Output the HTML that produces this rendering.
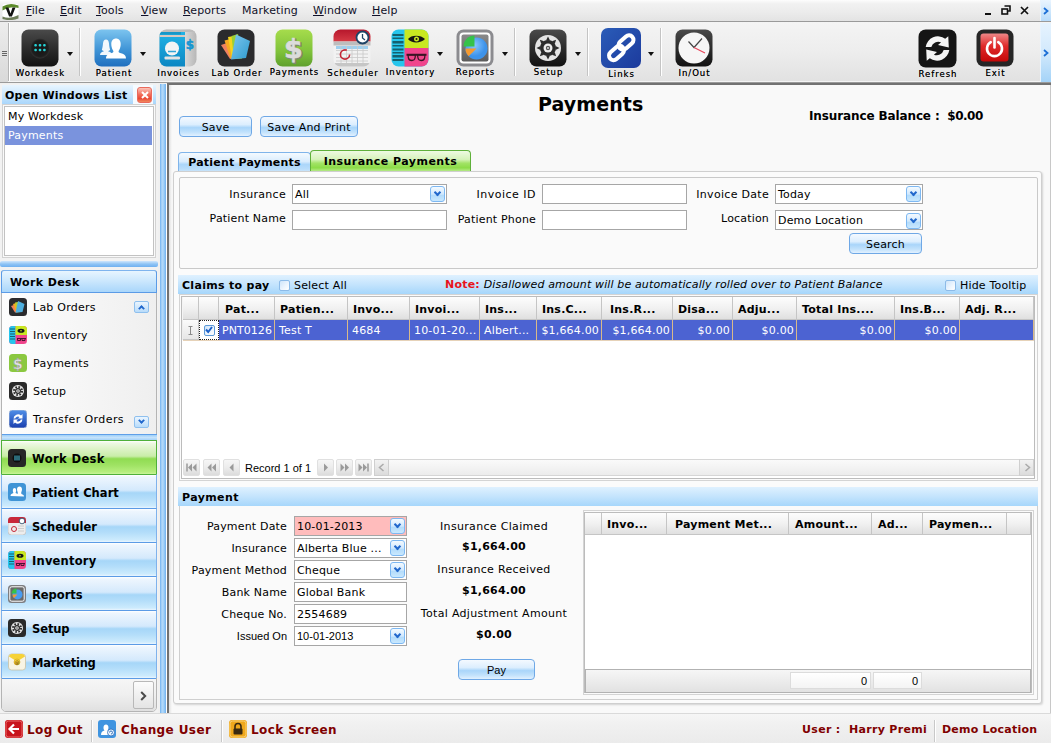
<!DOCTYPE html>
<html><head><meta charset="utf-8"><title>Payments</title>
<style>
*{box-sizing:border-box;margin:0;padding:0}
html,body{width:1051px;height:743px;overflow:hidden}
body{position:relative;background:#f0f0f0;font-family:"DejaVu Sans","Liberation Sans",sans-serif;font-size:11px;letter-spacing:0.18px;color:#000;line-height:1}
.a{position:absolute}
.t{position:absolute;white-space:nowrap;line-height:16px;height:16px}
.b{font-weight:bold}
u{text-decoration:underline;text-underline-offset:1px}
/* menubar */
#menubar{left:0;top:0;width:1051px;height:22px;background:linear-gradient(#fdfdfd 0,#f1f1f1 18%,#ececec 55%,#e3e3e3 100%);border-bottom:1px solid #9a9a9a}
#menubar .t{top:3px;font-size:11px;letter-spacing:0.12px;color:#101028}
/* toolbar */
#toolbar{left:0;top:22px;width:1051px;height:61px;background:linear-gradient(#f4f4f4,#ededed 50%,#e1e1e1);border-bottom:1px solid #9b9b9b;box-shadow:inset 0 -1px 0 #f4f4f4}
.ico{position:absolute;width:38px;height:38px;top:7px}
.tl{text-shadow:0 0 0 rgba(0,0,0,.7);color:#000;position:absolute;top:44px;height:14px;line-height:14px;font-size:9.5px;letter-spacing:0.95px;text-align:center;white-space:nowrap;transform:translateX(-50%);padding-left:1px}
.dd{position:absolute;top:29.5px;width:0;height:0;border:3.5px solid transparent;border-top:4px solid #111;border-bottom:0}
.sep{position:absolute;top:6px;width:1px;height:48px;background:#c4c4c4;border-right:1px solid #fff;box-sizing:content-box}

/* window controls */
#ovf{left:1040px;top:0;width:11px;height:84px}
/* left */
.hdr{position:absolute;background:linear-gradient(#e8f5ff,#cde8fd 45%,#a9d6fb);font-weight:bold}
.lst{position:absolute;background:#fff;border:1px solid #b9b9b9}
.nav{position:absolute;left:1px;width:156px;height:34px;border-top:1px solid #5b9be6;background:linear-gradient(#fff 0%,#eef6fe 6%,#e2f0fd 25%,#d4e9fc 46%,#a6d6f8 54%,#b4defa 72%,#cdebfd 94%,#eaf6ff 100%);font-weight:bold;font-size:11.5px;letter-spacing:0;border-left:1px solid #7fb2ec;border-right:1px solid #7fb2ec}
.nav .t{left:30px;top:10px;font-size:11.5px}
.nav svg{position:absolute;left:6px;top:8px;width:18px;height:18px}
.wi{position:absolute;left:9px;width:18px;height:18px}
.wt{position:absolute;left:33px;margin-top:1px;white-space:nowrap;line-height:16px;letter-spacing:0.25px}
.sb{position:absolute;width:15px;height:12px;border:1px solid #8fc0ee;border-radius:2px;background:linear-gradient(#eaf5ff,#b9dcfa)}
/* main */
.btn{position:absolute;height:21px;border:1px solid #6fa8e6;border-radius:4px;background:linear-gradient(#f4f9ff 0%,#dceefe 40%,#a9d5fa 56%,#c2e2fc 80%,#e2f1ff 100%);text-align:center;line-height:21px;white-space:nowrap}
.inp{position:absolute;height:20px;background:#fff;border:1px solid #a6a6a6;line-height:20px;padding-left:2px;white-space:nowrap;overflow:hidden}
.cb{position:absolute;right:1px;top:1px;width:15px;height:16px;border:1px solid #7db8f2;border-radius:3px;background:linear-gradient(#f4faff,#d2e9fd 50%,#b4dcfb 60%,#c9e8fe)}
.cb:after,.sb:after{content:"";box-sizing:border-box;position:absolute;left:4px;top:3.2px;width:5px;height:5px;border-right:2px solid #2268cc;border-bottom:2px solid #2268cc;transform:rotate(45deg) scale(1.05)}
.sb:after{top:1px;left:4px;transform:rotate(45deg) scale(.95)}.sb.up:after{transform:rotate(225deg) scale(.95);top:3.5px}
.lbl{position:absolute;margin-top:1px;white-space:nowrap;text-align:right;line-height:16px}
.gh{position:absolute;top:0;height:23px;border-right:1px solid #c5c5c5;background:linear-gradient(#fdfdfd,#f1f1f1 50%,#e0e0e0);font-weight:bold;line-height:25px;padding-left:5px;white-space:nowrap;overflow:hidden;border-bottom:1px solid #c5c5c5}
.gc{position:absolute;top:0;height:20px;border-right:1px solid #d8b98a;color:#fff;line-height:21px;padding:0 2px 0 4px;white-space:nowrap;overflow:hidden}
.r{text-align:right}
.nb{position:absolute;top:1px;width:17px;height:17px;border:1px solid #e0e0e0;background:linear-gradient(#f6f6f6,#ececec 50%,#dcdcdc);border-radius:2px}
.nb svg{position:absolute;left:2px;top:3px;width:11px;height:9px}
.ck{position:absolute;width:11px;height:11px;border:1px solid #8dbbe8;border-radius:2px;background:linear-gradient(135deg,#cfe5fa,#eef6fe 60%,#fff)}
.st{position:absolute;top:7px;line-height:18px;font-weight:bold;font-size:12px;letter-spacing:0.4px;color:#800000;white-space:nowrap}
.ss{position:absolute;top:6px;width:1px;height:22px;background:#c8c8c8;border-right:1px solid #fff;box-sizing:content-box}
.b,b,.hdr,.gh{font-size:11px;letter-spacing:0.22px}
.tl{font-family:"DejaVu Sans Condensed","DejaVu Sans","Liberation Sans",sans-serif}
</style></head>
<body>
<!-- MENUBAR -->
<div id="menubar" class="a">
<svg class="a" style="left:2px;top:3px" width="17" height="17" viewBox="0 0 17 17"><rect x="0.5" y="1" width="16" height="15" rx="2" fill="#fff"/><path d="M0.5 3.500 Q8 -1 16.5 2.500 L16.5 5 Q8 2.500 0.5 7.500Z" fill="#5c8a2a"/><path d="M0.5 13.500 Q8 16.500 16.5 12 L16.5 15.5 Q8 18.500 0.5 16Z" fill="#6e7d5a"/><path d="M3.5 4.5h3l2 6 2-6h3l-3.6 9h-2.8z" fill="#111"/></svg>
<div class="t" style="left:26px"><u>F</u>ile</div>
<div class="t" style="left:60px"><u>E</u>dit</div>
<div class="t" style="left:96px"><u>T</u>ools</div>
<div class="t" style="left:141px"><u>V</u>iew</div>
<div class="t" style="left:183px"><u>R</u>eports</div>
<div class="t" style="left:242px">Marketing</div>
<div class="t" style="left:313px"><u>W</u>indow</div>
<div class="t" style="left:372px"><u>H</u>elp</div>
</div>
<!-- TOOLBAR -->
<div id="toolbar" class="a">
<div class="a" style="left:0;top:0;width:8px;height:60px;background:linear-gradient(#ededed,#d9d9d9)"></div>
<div class="a" style="left:8px;top:1px;width:1px;height:58px;background:#b5b5b5"></div>
<div class="a" style="left:9px;top:1px;width:1px;height:58px;background:#fff"></div>
<div class="a" style="left:2px;top:29px;width:5px;height:1px;background:#666;box-shadow:0 2px 0 #666,0 4px 0 #666"></div>
<div class="sep" style="left:79px"></div>
<div class="sep" style="left:514px"></div>
<div class="sep" style="left:587px"></div>
<div class="sep" style="left:660px"></div>
<i class="dd" style="left:67px"></i><i class="dd" style="left:140px"></i><i class="dd" style="left:437px"></i><i class="dd" style="left:502px"></i><i class="dd" style="left:575px"></i><i class="dd" style="left:648px"></i>
<!-- Workdesk -->
<svg class="ico" style="left:21px" viewBox="0 0 38 38"><defs><linearGradient id="gdk" x1="0" y1="0" x2="0" y2="1"><stop offset="0" stop-color="#4a4a4a"/><stop offset="0.5" stop-color="#2c2c2c"/><stop offset="1" stop-color="#121212"/></linearGradient><radialGradient id="gdc"><stop offset="0" stop-color="#151515"/><stop offset="0.8" stop-color="#1d1d1d"/><stop offset="1" stop-color="#333"/></radialGradient></defs><rect x="0.5" y="0.5" width="37" height="37" rx="7" fill="url(#gdk)"/><circle cx="19" cy="19.5" r="10" fill="url(#gdc)"/><g fill="#25d4d8"><rect x="13.3" y="15" width="2.6" height="2.4" rx="1"/><rect x="17.7" y="15" width="2.6" height="2.4" rx="1"/><rect x="22.1" y="15" width="2.6" height="2.4" rx="1"/><rect x="13.3" y="19.8" width="2.6" height="2.4" rx="1"/><rect x="17.7" y="19.8" width="2.6" height="2.4" rx="1"/><rect x="22.1" y="19.8" width="2.6" height="2.4" rx="1"/></g></svg>
<div class="tl" style="left:40px">Workdesk</div>
<!-- Patient -->
<svg class="ico" style="left:94px" viewBox="0 0 38 38"><defs><linearGradient id="gpt" x1="0" y1="0" x2="0" y2="1"><stop offset="0" stop-color="#7cc4ef"/><stop offset="0.55" stop-color="#3f94d6"/><stop offset="1" stop-color="#1f6fbf"/></linearGradient></defs><rect x="0.5" y="0.5" width="37" height="37" rx="7" fill="url(#gpt)"/><path d="M6 26c0-2.5 2-3.2 4-3.8l-2.2-1.2c.6-2 1-3.800 1.200-6.500C9.200 12 10.300 10.500 12 10.500s2.800 1.500 3 4c.2 2.700.6 4.500 1.200 6.500L14 22.200c2 .6 4 1.300 4 3.800z" fill="#fff" opacity=".93"/><path d="M12 29.500c0-4 3-4.700 6.300-5.800 1.200-.4 1.400-1.300.8-2.300-1.300-2-1.800-4-1.800-6.400 0-3.400 1.900-5.500 4.700-5.500s4.700 2.100 4.700 5.500c0 2.400-.5 4.400-1.800 6.400-.6 1-.4 1.900.8 2.300 3.300 1.100 6.300 1.800 6.300 5.800z" fill="#fff"/></svg>
<div class="tl" style="left:113.500px">Patient</div>
<!-- Invoices -->
<svg class="ico" style="left:159px" viewBox="0 0 38 38"><defs><clipPath id="cinv"><rect x="0.5" y="0.5" width="37" height="37" rx="7"/></clipPath><linearGradient id="ginv" x1="0" y1="0" x2="0" y2="1"><stop offset="0" stop-color="#22b3e6"/><stop offset="1" stop-color="#0b86c2"/></linearGradient><linearGradient id="ginr" x1="0" y1="0" x2="1" y2="0"><stop offset="0" stop-color="#c9c9c9"/><stop offset="0.5" stop-color="#ededed"/><stop offset="1" stop-color="#b5b5b5"/></linearGradient></defs><g clip-path="url(#cinv)"><rect width="38" height="38" fill="url(#ginr)"/><rect x="0" y="0" width="38" height="3" fill="#bdbdbd"/><rect x="0" y="3" width="26" height="35" fill="url(#ginv)"/><rect x="0" y="3" width="22" height="2.500" fill="#1697c8"/><rect x="0" y="6" width="26" height="2" fill="#d9c9c0"/><circle cx="13" cy="19.500" r="7" fill="#f4f4f4"/><path d="M9 22.500h8" stroke="#35a5d5" stroke-width="1.300"/><rect x="5.500" y="27.500" width="15.500" height="3" rx="1" fill="#e3e3e3"/><text x="26.800" y="20" font-family="DejaVu Sans,sans-serif" font-weight="bold" font-size="12" fill="#1596d2" stroke="#1596d2" stroke-width="0.500">$</text></g></svg>
<div class="tl" style="left:178px">Invoices</div>
<!-- Lab Order -->
<svg class="ico" style="left:217px" viewBox="0 0 38 38"><defs><linearGradient id="glb" x1="0" y1="0" x2="1" y2="1"><stop offset="0" stop-color="#7fc6ee"/><stop offset="1" stop-color="#2f9ccf"/></linearGradient></defs><rect x="0.5" y="0.5" width="37" height="37" rx="7" fill="#2b2b2d"/><path d="M4 16l6-2 8 15-5 1z" fill="#f08060"/><path d="M7.500 11.500l6-1.500 6 19-6 .5z" fill="#f7a823"/><path d="M11 8l6-1 5 22-7 .5z" fill="#f4d51c"/><path d="M14.500 7l6.500-2 4 24.500-8 .5z" fill="#9bd033"/><path d="M19 5.500l14 6.500-4 17-15 1.500z" fill="url(#glb)"/></svg>
<div class="tl" style="left:236.500px">Lab Order</div>
<!-- Payments -->
<svg class="ico" style="left:275px" viewBox="0 0 38 38"><defs><linearGradient id="gpy" x1="0" y1="0" x2="0" y2="1"><stop offset="0" stop-color="#a6dc4c"/><stop offset="0.6" stop-color="#7fc23a"/><stop offset="1" stop-color="#5fa02c"/></linearGradient></defs><rect x="0.5" y="0.5" width="37" height="37" rx="7" fill="url(#gpy)"/><text x="19.800" y="29.500" text-anchor="middle" font-family="DejaVu Sans,sans-serif" font-weight="bold" font-size="27" fill="#7d8a70" stroke="#7d8a70" stroke-width="1.200">$</text><text x="18.500" y="28.500" text-anchor="middle" font-family="DejaVu Sans,sans-serif" font-weight="bold" font-size="27" fill="#dcdcdc" stroke="#dcdcdc" stroke-width="0.600">$</text></svg>
<div class="tl" style="left:294px;top:43px">Payments</div>
<!-- Scheduler -->
<svg class="ico" style="left:333px" viewBox="0 0 38 38"><defs><clipPath id="csch"><rect x="0.5" y="0.5" width="37" height="37" rx="7"/></clipPath><linearGradient id="gsr" x1="0" y1="0" x2="0" y2="1"><stop offset="0" stop-color="#b5152b"/><stop offset="1" stop-color="#d63a45"/></linearGradient></defs><g clip-path="url(#csch)"><rect width="38" height="38" fill="#f2f2f2"/><rect width="38" height="12.500" fill="url(#gsr)"/><rect y="12.500" width="38" height="4" fill="#bdbdbd"/><rect x="3" y="17" width="32" height="3" fill="#9fd0ee"/><g stroke="#c9c9c9" stroke-width="0.800"><path d="M3 21.500h32M3 25h32M3 28.500h32M3 32h32M8 17v17M13.500 17v17M19 17v17M24.500 17v17M30 17v17"/></g><rect y="34" width="38" height="4" fill="#c6c6c6"/><circle cx="12" cy="25.500" r="4.600" fill="none" stroke="#c42535" stroke-width="1.600" stroke-dasharray="23 6"/></g><circle cx="29.500" cy="8.500" r="6" fill="#fff" stroke="#1f4466" stroke-width="1.800"/><path d="M29.500 5v4l2.500 2" fill="none" stroke="#1f4466" stroke-width="1.300"/></svg>
<div class="tl" style="left:352.500px">Scheduler</div>
<!-- Inventory -->
<svg class="ico" style="left:391px" viewBox="0 0 38 38"><defs><clipPath id="civ"><rect x="0.500" y="0.500" width="37" height="37" rx="7"/></clipPath></defs><g clip-path="url(#civ)"><rect width="38" height="38" fill="#26c5ec"/><rect x="13.500" width="25" height="19" fill="#c8e821"/><rect x="13.500" y="19" width="25" height="19" fill="#f0458c"/><g fill="#14606f"><rect x="1.500" y="5" width="11" height="2"/><rect x="1.500" y="8.500" width="11" height="1.500"/><rect x="1.500" y="12" width="11" height="2.500"/><rect x="1.500" y="16" width="11" height="1.500"/><rect x="1.500" y="19.500" width="11" height="2"/><rect x="1.500" y="23" width="11" height="1.500"/><rect x="1.500" y="26" width="11" height="2.500"/><rect x="1.500" y="30" width="11" height="2"/></g><path d="M17 10c3-4.500 13-4.500 17 0-4 4.500-14 4.500-17 0z" fill="#151515"/><circle cx="25.500" cy="10" r="2.500" fill="#c8e821"/><circle cx="25.500" cy="10" r="1" fill="#151515"/><path d="M15.500 25.800h20" stroke="#3a1525" stroke-width="2" fill="none"/><path d="M17 26h7.500l-.5 3c-.3 1.600-1.500 2.500-3.200 2.500-1.900 0-3.100-1-3.400-2.700zM26.500 26h7.500l-.4 2.800c-.3 1.700-1.500 2.700-3.400 2.700-1.700 0-2.900-.9-3.200-2.500z" fill="#f0458c" fill-opacity="0.3" stroke="#3a1525" stroke-width="1.300"/></g></svg>
<div class="tl" style="left:410px;top:43px">Inventory</div>
<!-- Reports -->
<svg class="ico" style="left:456px" viewBox="0 0 38 38"><defs><linearGradient id="grp" x1="0" y1="0" x2="0" y2="1"><stop offset="0" stop-color="#8a8a8a"/><stop offset="1" stop-color="#5c5c5c"/></linearGradient><radialGradient id="gpie" cx="0.400" cy="0.350"><stop offset="0" stop-color="#8cc8ff"/><stop offset="1" stop-color="#3d93ea"/></radialGradient></defs><rect x="0.5" y="0.5" width="37" height="37" rx="7" fill="#8b8b8f"/><rect x="3.500" y="3.500" width="31" height="31" rx="4" fill="#fff"/><rect x="5.500" y="5.500" width="27" height="27" rx="2" fill="url(#grp)"/><circle cx="20.500" cy="19.500" r="11" fill="url(#gpie)"/><path d="M20.500 19.500h-11a11 11 0 0 0 3.200 7.800z" fill="#f59a2f"/><path d="M18.500 17.500v-11a11 11 0 0 0-11 11z" fill="#35c24a"/></svg>
<div class="tl" style="left:475px;top:43px">Reports</div>
<!-- Setup -->
<svg class="ico" style="left:529px" viewBox="0 0 38 38"><rect x="0.5" y="0.5" width="37" height="37" rx="7" fill="url(#gdk)"/><circle cx="19" cy="19" r="13" fill="#e4e4e4"/><g fill="#2a2a2a"><circle cx="19" cy="19" r="8"/><g id="teeth"><path d="M17 11.500l2-4 2 4z"/><path d="M17 26.500l2 4 2-4z"/><path d="M11.500 17l-4 2 4 2z"/><path d="M26.500 17l4 2-4 2z"/></g><use href="#teeth" transform="rotate(45 19 19)"/></g><circle cx="19" cy="19" r="4.500" fill="#ececec"/><circle cx="19" cy="19" r="2.200" fill="#555"/><circle cx="19" cy="19" r="1" fill="#ddd"/></svg>
<div class="tl" style="left:548px;top:43px">Setup</div>
<!-- Links -->
<svg class="ico" style="left:601px;top:5.500px;width:40px;height:40px" viewBox="0 0 40 40"><defs><linearGradient id="glk" x1="0" y1="0" x2="1" y2="1"><stop offset="0" stop-color="#2a5cb8"/><stop offset="1" stop-color="#1c3a9c"/></linearGradient></defs><rect x="0" y="0" width="40" height="40" rx="7" fill="url(#glk)"/><g fill="none" stroke="#fff" stroke-width="4" stroke-linecap="round"><rect x="-8.500" y="-4.500" width="17" height="9" rx="4.500" transform="translate(25 14.500) rotate(-42)"/><rect x="-8.500" y="-4.500" width="17" height="9" rx="4.500" transform="translate(15.500 25) rotate(-42)"/></g></svg>
<div class="tl" style="left:621px;top:45px">Links</div>
<!-- In/Out -->
<svg class="ico" style="left:675px" viewBox="0 0 38 38"><rect x="0.5" y="0.5" width="37" height="37" rx="7" fill="url(#gdk)"/><circle cx="19" cy="19" r="15.500" fill="#f6f6f6"/><path d="M13.500 12.500l5.500 6 8-9" fill="none" stroke="#444" stroke-width="1.200"/><path d="M19 18.500l11 5.500" stroke="#e8455a" stroke-width="1.200"/></svg>
<div class="tl" style="left:694px">In/Out</div>
<!-- Refresh -->
<svg class="ico" style="left:917.500px;top:6.500px;width:39px;height:39px" viewBox="0 0 38 38"><rect x="0.5" y="0.5" width="37" height="37" rx="7" fill="#151515"/><path d="M7.500 17.500a12 12 0 0 1 19-8l3-2.500.5 11-10.500-2.500 3-2.500a7 7 0 0 0-9.500 4.500z" fill="#f4f4f4"/><path d="M30.500 20.500a12 12 0 0 1-19 8l-3 2.500-.5-11 10.500 2.500-3 2.500a7 7 0 0 0 9.500-4.500z" fill="#f4f4f4"/></svg>
<div class="tl" style="left:937.500px;top:45px">Refresh</div>
<!-- Exit -->
<svg class="ico" style="left:976px" viewBox="0 0 38 38"><defs><linearGradient id="gex" x1="0" y1="0" x2="0" y2="1"><stop offset="0" stop-color="#e88"/><stop offset="0.450" stop-color="#e02a2a"/><stop offset="1" stop-color="#c40808"/></linearGradient></defs><rect x="0.5" y="0.5" width="37" height="37" rx="7" fill="#262626"/><rect x="4.500" y="4.500" width="28" height="28" rx="3" fill="url(#gex)"/><path d="M14.700 13.200a7.500 7.500 0 1 0 7.600 0" fill="none" stroke="#fff" stroke-width="2.600" stroke-linecap="round"/><path d="M18.500 9v9.500" stroke="#fff" stroke-width="2.600" stroke-linecap="round"/></svg>
<div class="tl" style="left:995px">Exit</div>
</div>

<!-- window controls / overflow -->
<div class="a" style="left:985px;top:13px;width:6px;height:2px;background:#111"></div>
<svg class="a" style="left:1001px;top:5px" width="10" height="10" viewBox="0 0 10 10"><path d="M3.500 1h5.500v5h-2" fill="none" stroke="#111" stroke-width="1.600"/><rect x="1" y="4" width="5.500" height="5" fill="none" stroke="#111" stroke-width="1.600"/></svg>
<svg class="a" style="left:1020px;top:6px" width="9" height="9" viewBox="0 0 9 9"><path d="M1 1l7 7M8 1l-7 7" stroke="#111" stroke-width="1.700"/></svg>
<div id="ovf" class="a"><div class="a" style="left:0;top:0;width:11px;height:21px;background:linear-gradient(#eaf5ff,#b7dbfa);border-left:1px solid #e8f3fd"></div><div class="a" style="left:0;top:23px;width:11px;height:59px;background:linear-gradient(#e6f3fe,#d2e9fc 50%,#a4d3f8);border-left:1px solid #e8f3fd"></div>
<svg class="a" style="left:3px;top:7px" width="6" height="8" viewBox="0 0 6 8"><path d="M1 1l3.500 3-3.500 3" fill="none" stroke="#1c6fd6" stroke-width="1.800"/></svg>
<svg class="a" style="left:3px;top:49px" width="6" height="8" viewBox="0 0 6 8"><path d="M1 1l3.500 3-3.500 3" fill="none" stroke="#1c6fd6" stroke-width="1.800"/></svg></div>

<!-- LEFT PANEL -->
<div class="a" id="left" style="left:0;top:84px;width:158px;height:629px;background:#f2f2f2">
 <div class="hdr" style="left:2px;top:1px;width:154px;height:19px"><div class="t" style="left:3px;top:3px">Open Windows List</div>
  <div class="a" style="left:131px;top:0;width:20px;height:19px;background:#f6fbff"></div>
  <div class="a" style="left:135px;top:2px;width:15px;height:16px;border:1px solid #ea6a5c;border-radius:3px;background:linear-gradient(#fbc4ba,#f2705e 45%,#ea4a36 75%,#f08a60)"><svg class="a" style="left:2.500px;top:3px" width="8" height="8" viewBox="0 0 8 8"><path d="M1 1l6 6M7 1l-6 6" stroke="#fff" stroke-width="2"/></svg></div>
 </div>
 <div class="lst" style="left:2px;top:20px;width:154px;height:154px;border-color:#d2d2d2;background:#fafafa"></div>
 <div class="lst" style="left:4px;top:22px;width:150px;height:150px;border-color:#c2c2c2"></div>
 <div class="t" style="left:8px;top:25px">My Workdesk</div>
 <div class="a" style="left:5px;top:42px;width:147px;height:19px;background:#7a93dd"></div>
 <div class="t" style="left:8px;top:43.500px;color:#fff">Payments</div>
 <!-- h splitter -->
 <div class="a" style="left:0;top:177px;width:158px;height:6px;background:linear-gradient(#cfe6fc,#8fc4f5 50%,#6fb0f0);border-radius:2px"></div>
 <!-- work desk panel -->
 <div class="a" style="left:1px;top:186px;width:156px;height:442px;border:1px solid #b4b4b4;border-radius:3px 3px 5px 5px;background:linear-gradient(90deg,#fdfdfd,#efefef)"></div>
 <div class="hdr" style="left:1px;top:186px;width:156px;height:23px;border:1px solid #5b9be6;border-radius:3px 3px 0 0;border-top-color:#7fb4ee"><div class="t" style="left:8px;top:4px;letter-spacing:0.38px">Work Desk</div></div>
 <!-- items -->
 <svg class="wi" style="top:214px" viewBox="0 0 18 18"><rect width="18" height="18" rx="3.500" fill="#2b2b2d"/><path d="M2 8l3-1 4 7-3 .5z" fill="#f08060"/><path d="M4 6l3-1 3 9-3 .3z" fill="#f7a823"/><path d="M6 4.500l3-.5 2.500 10-3.500 .3z" fill="#b5d030"/><path d="M9 3l6.500 3-2 8-7 .7z" fill="#4fb0e0"/></svg>
 <div class="wt" style="top:215px">Lab Orders</div>
 <svg class="wi" style="top:242px" viewBox="0 0 18 18"><rect width="18" height="18" rx="3.500" fill="#f0458c"/><path d="M0 3.500a3.500 3.500 0 0 1 3.500-3.500h3v18h-3a3.500 3.500 0 0 1-3.500-3.500z" fill="#26c5ec"/><path d="M6.500 0h8a3.500 3.500 0 0 1 3.500 3.500v5.500h-11.500z" fill="#c8e821"/><path d="M1 3h5M1 5.500h5M1 8h5M1 10.500h5M1 13h5" stroke="#14606f" stroke-width="1.200"/><ellipse cx="12" cy="4.700" rx="3.500" ry="2" fill="#151515"/><circle cx="12" cy="4.700" r="0.800" fill="#c8e821"/><path d="M8 12.500h9M8.500 12.500v2h3v-2M13 12.500v2h3v-2" stroke="#4a1530" stroke-width="1" fill="none"/></svg>
 <div class="wt" style="top:243px">Inventory</div>
 <svg class="wi" style="top:270px" viewBox="0 0 18 18"><rect width="18" height="18" rx="3.500" fill="#8bc840"/><text x="9" y="14.500" text-anchor="middle" font-family="DejaVu Sans,sans-serif" font-weight="bold" font-size="14" fill="#e4e4e4" stroke="#9a9a9a" stroke-width="0.500">$</text></svg>
 <div class="wt" style="top:271px">Payments</div>
 <svg class="wi" style="top:298px" viewBox="0 0 18 18"><rect width="18" height="18" rx="3.500" fill="#2a2a2a"/><circle cx="9" cy="9" r="6" fill="#e4e4e4"/><circle cx="9" cy="9" r="4" fill="none" stroke="#2a2a2a" stroke-width="2" stroke-dasharray="1.600 1.540"/><circle cx="9" cy="9" r="3" fill="#2a2a2a"/><circle cx="9" cy="9" r="1.800" fill="#e4e4e4"/><circle cx="9" cy="9" r="0.800" fill="#444"/></svg>
 <div class="wt" style="top:299px">Setup</div>
 <svg class="wi" style="top:326px" viewBox="0 0 18 18"><defs><linearGradient id="gtr" x1="0" y1="0" x2="0" y2="1"><stop offset="0" stop-color="#4f8fe8"/><stop offset="1" stop-color="#1a3fae"/></linearGradient></defs><rect width="18" height="18" rx="3.500" fill="url(#gtr)" stroke="#b8c4d8" stroke-width="0.800"/><path d="M4.500 8.500a4.500 4.500 0 0 1 7.500-3l1.500-1.500v4.500h-4.500l1.500-1.500a2.800 2.800 0 0 0-4.300 1.500z" fill="#fff"/><path d="M13.500 9.500a4.500 4.500 0 0 1-7.500 3l-1.500 1.500v-4.500h4.500l-1.500 1.500a2.800 2.800 0 0 0 4.300-1.500z" fill="#fff"/></svg>
 <div class="wt" style="top:327px;letter-spacing:0.42px">Transfer Orders</div>
 <div class="sb up" style="left:134px;top:217px"></div>
 <div class="sb" style="left:134px;top:332px"></div>
 <!-- nav -->
 <div class="a" style="left:2px;top:350px;width:155px;height:6px;background:linear-gradient(#9fd0f8,#c4e2fb 50%,#a4d2f8);border-top:1px solid #5f9fe8"></div>
 <div class="nav" style="top:356px;background:linear-gradient(#fff 0%,#eef9e4 6%,#dcf3c6 25%,#c9eda8 46%,#90dc52 54%,#9ee262 72%,#b6ee7e 94%,#c8f49a 100%);border-color:#4fb03a"><svg viewBox="0 0 18 18"><rect width="18" height="18" rx="3.500" fill="#262626"/><circle cx="9" cy="9" r="4.500" fill="#0e0e0e"/><rect x="6" y="6.500" width="6" height="5" fill="#2b6a78"/></svg><div class="t" style="letter-spacing:0.39px">Work Desk</div></div>
 <div class="nav" style="top:390px;border-top-color:#4fb03a"><svg viewBox="0 0 18 18"><rect width="18" height="18" rx="3.500" fill="#3f94d6"/><path d="M2.500 13c0-2 1.500-2.500 3-3-1-1.500-1-5 1-5s2 3.500 1 5c1 .3 1.500 .5 2 1 1-1.500-.5-2.500-.5-4.500 0-2 1-3 2.500-3s2.500 1 2.500 3c0 2-1.500 3-.5 4.500 1.500.5 2.500 1 2.500 2.500z" fill="#fff"/></svg><div class="t" style="letter-spacing:0.04px">Patient Chart</div></div>
 <div class="nav" style="top:424px"><svg viewBox="0 0 18 18"><rect width="18" height="18" rx="3.500" fill="#ededed" stroke="#b5b5b5" stroke-width="0.600"/><path d="M0 3.500a3.500 3.500 0 0 1 3.500-3.500h11a3.500 3.500 0 0 1 3.500 3.500v2.500h-18z" fill="#c8283a"/><circle cx="14" cy="4" r="2.800" fill="#fff" stroke="#1f4466" stroke-width="0.800"/><circle cx="6" cy="12" r="2.500" fill="none" stroke="#c42535" stroke-width="1"/><path d="M10 9h6M10 11.500h6M10 14h6" stroke="#c4c4c4" stroke-width="0.800"/></svg><div class="t" style="letter-spacing:0px">Scheduler</div></div>
 <div class="nav" style="top:458px"><svg viewBox="0 0 18 18"><rect width="18" height="18" rx="3.500" fill="#f0458c"/><path d="M0 3.500a3.500 3.500 0 0 1 3.500-3.500h3v18h-3a3.500 3.500 0 0 1-3.500-3.500z" fill="#26c5ec"/><path d="M6.500 0h8a3.500 3.500 0 0 1 3.500 3.500v5.500h-11.500z" fill="#c8e821"/><path d="M1 3h5M1 5.500h5M1 8h5M1 10.500h5M1 13h5" stroke="#14606f" stroke-width="1.200"/><ellipse cx="12" cy="4.700" rx="3.500" ry="2" fill="#151515"/><circle cx="12" cy="4.700" r="0.800" fill="#c8e821"/><path d="M8 12.500h9M8.500 12.500v2h3v-2M13 12.500v2h3v-2" stroke="#4a1530" stroke-width="1" fill="none"/></svg><div class="t" style="letter-spacing:0.21px">Inventory</div></div>
 <div class="nav" style="top:492px"><svg viewBox="0 0 18 18"><rect width="18" height="18" rx="3.500" fill="#7d7d80"/><rect x="1.800" y="1.800" width="14.400" height="14.400" rx="2" fill="#6a6a6a" stroke="#fff" stroke-width="1"/><circle cx="9.500" cy="9.500" r="5" fill="#4a9cf0"/><path d="M9.500 9.500h-5a5 5 0 0 0 1.500 3.500z" fill="#f59a2f"/><path d="M8.500 8.500v-5a5 5 0 0 0-5 5z" fill="#35c24a"/></svg><div class="t" style="letter-spacing:-0.04px">Reports</div></div>
 <div class="nav" style="top:526px"><svg viewBox="0 0 18 18"><rect width="18" height="18" rx="3.500" fill="#2a2a2a"/><circle cx="9" cy="9" r="6" fill="#e4e4e4"/><circle cx="9" cy="9" r="4" fill="none" stroke="#2a2a2a" stroke-width="2" stroke-dasharray="1.600 1.540"/><circle cx="9" cy="9" r="3" fill="#2a2a2a"/><circle cx="9" cy="9" r="1.800" fill="#e4e4e4"/><circle cx="9" cy="9" r="0.800" fill="#444"/></svg><div class="t" style="letter-spacing:-0.1px">Setup</div></div>
 <div class="nav" style="top:560px;height:34px"><svg viewBox="0 0 18 18"><rect x="0.500" y="1" width="17" height="16" rx="3" fill="#f8f4e4" stroke="#c9c2a4" stroke-width="0.800"/><path d="M1 3.500a3 3 0 0 1 3-2.500h10a3 3 0 0 1 3 2.500l-8 5z" fill="#f6d238"/><circle cx="9" cy="9" r="3" fill="#f6d238" stroke="#d0a820" stroke-width="0.600"/><text x="9" y="11" text-anchor="middle" font-size="5" font-family="DejaVu Sans,sans-serif" fill="#7a5a10">@</text></svg><div class="t" style="letter-spacing:-0.26px">Marketing</div></div>
 <div class="a" style="left:2px;top:594px;width:154px;height:33px;border-top:1px solid #5b9be6;border-radius:0 0 4px 4px;background:linear-gradient(#f6f6f6,#efefef 50%,#e0e0e0)"></div>
 <div class="a" style="left:133px;top:597px;width:21px;height:28px;border:1px solid #b8b8b8;border-radius:2px;background:linear-gradient(#fcfcfc,#e4e4e4)"><svg class="a" style="left:6px;top:9px" width="7" height="10" viewBox="0 0 7 10"><path d="M1.200 1l4 4-4 4" fill="none" stroke="#4a4a4a" stroke-width="2"/></svg></div>
</div>
<!-- v splitter -->
<div class="a" style="left:160px;top:84px;width:6px;height:629px;background:linear-gradient(90deg,#6fb1f0,#b5dafa 35%,#a5d2f8 60%,#6fb1f0)"></div><div class="a" style="left:166px;top:84px;width:1px;height:629px;background:#fff"></div>

<div class="a" id="main" style="left:167px;top:83px;width:884px;height:630px;background:#f9f9f9;border-left:2px solid #727272;border-top:2px solid #727272"></div>
<div class="a" style="left:169px;top:85px;width:3px;height:628px;background:linear-gradient(90deg,#e0e0e0,#f9f9f9)"></div>
<div class="t b" style="left:538px;top:92px;font-size:19px;letter-spacing:0.1px;line-height:24px;height:24px">Payments</div>
<div class="t b" style="left:809px;top:108px;white-space:pre;font-size:12px;letter-spacing:-0.12px">Insurance Balance : <span style="letter-spacing:-0.5px"> $0.00</span></div>
<div class="btn" style="left:179px;top:116px;width:73px">Save</div>
<div class="btn" style="left:260px;top:116px;width:98px">Save And Print</div>
<div class="a" style="left:1050px;top:85px;width:1px;height:628px;background:#c8c8c8"></div>
<!-- tabs -->
<div class="a b" style="left:178px;top:152px;width:133px;height:20px;border:1px solid #7fb4ea;border-bottom:0;border-radius:4px 4px 0 0;background:linear-gradient(#f4faff,#d9ecfd 45%,#acd6fa 60%,#b9ddfb 85%,#d4eafd);line-height:20px;text-align:center">Patient Payments</div>
<div class="a b" style="left:310px;top:150px;width:161px;height:22px;border:1px solid #5fb03a;border-bottom:0;border-radius:4px 4px 0 0;background:linear-gradient(#eefae2,#d6f3ba 40%,#a2e366 58%,#8cdc48 80%,#c4f09c);line-height:22px;text-align:center;letter-spacing:0.46px">Insurance Payments</div>
<div class="a" style="left:173px;top:171px;width:869px;height:533px;border:1px solid #cfcfcf;border-radius:3px;background:#fbfbfb;box-shadow:1px 1px 2px rgba(0,0,0,.15)"></div>
<!-- filter group -->
<div class="a" style="left:179px;top:177px;width:859px;height:92px;border:1px solid #c9c9c9;border-radius:2px;background:#fafafa"></div>
<div class="lbl" style="left:185px;width:101px;top:186px;letter-spacing:0.3px">Insurance</div>
<div class="inp" style="left:292px;top:184px;width:155px">All<i class="cb"></i></div>
<div class="lbl" style="left:435px;width:101px;top:186px;letter-spacing:0.5px">Invoice ID</div>
<div class="inp" style="left:542px;top:184px;width:145px"></div>
<div class="lbl" style="left:668px;width:101px;top:186px;letter-spacing:0.3px">Invoice Date</div>
<div class="inp" style="left:775px;top:184px;width:148px">Today<i class="cb"></i></div>
<div class="lbl" style="left:185px;width:101px;top:210px">Patient Name</div>
<div class="inp" style="left:292px;top:210px;width:155px"></div>
<div class="lbl" style="left:435px;width:101px;top:211px">Patient Phone</div>
<div class="inp" style="left:542px;top:210px;width:145px"></div>
<div class="lbl" style="left:668px;width:101px;top:210px">Location</div>
<div class="inp" style="left:775px;top:210px;width:148px;line-height:20px">Demo Location<i class="cb" style="top:2px"></i></div>
<div class="btn" style="left:849px;top:233px;width:73px">Search</div>
<!-- claims header -->
<div class="hdr" style="left:178px;top:275px;width:860px;height:19px;background:linear-gradient(#dff1ff,#c4e4fd 50%,#a6d6fb)"></div>
<div class="t b" style="left:182px;top:278px;letter-spacing:0.3px">Claims to pay</div>
<div class="ck" style="left:279px;top:280px"></div>
<div class="t" style="left:294px;top:278px">Select All</div>
<div class="t" style="left:445px;top:277px"><b style="color:#e8141c">Note:</b> <i style="letter-spacing:0.13px">Disallowed amount will be automatically rolled over to Patient Balance</i></div>
<div class="ck" style="left:945px;top:280px"></div>
<div class="t" style="left:960px;top:278px">Hide Tooltip</div>
<!-- grid -->
<div class="a" style="left:179px;top:294px;width:859px;height:187px;border:1px solid #d4d4d4;background:#fbfbfb"></div>
<div class="a" style="left:181px;top:296px;width:854px;height:183px;border:1px solid #bcbcbc;background:#fff"></div>
<div class="a" style="left:183px;top:297px;width:851px;height:23px;box-shadow:-1px 0 0 #f4f4f4"><div class="gh" style="left:0px;width:16px;padding:0"></div><div class="gh" style="left:16px;width:20px;padding:0"></div><div class="gh" style="left:36px;width:56px;padding-left:6px">Pat...</div><div class="gh" style="left:92px;width:73px;padding-left:5px">Patien...</div><div class="gh" style="left:165px;width:62px;padding-left:5px">Invo...</div><div class="gh" style="left:227px;width:70px;padding-left:5px">Invoi...</div><div class="gh" style="left:297px;width:57px;padding-left:5px">Ins...</div><div class="gh" style="left:354px;width:65px;padding-left:5px">Ins.C...</div><div class="gh" style="left:419px;width:71px;padding-left:8px">Ins.R...</div><div class="gh" style="left:490px;width:60px;padding-left:5px">Disa...</div><div class="gh" style="left:550px;width:64px;padding-left:5px">Adju...</div><div class="gh" style="left:614px;width:98px;padding-left:5px">Total Ins....</div><div class="gh" style="left:712px;width:65px;padding-left:5px">Ins.B...</div><div class="gh" style="left:777px;width:74px;padding-left:5px">Adj. R...</div></div>
<div class="a" style="left:183px;top:320px;width:851px;height:20px;background:#4c63d2;box-shadow:-1px 0 0 #eee,0 1px 0 #e6d2b8">
 <div class="a" style="left:0;top:0;width:16px;height:20px;background:linear-gradient(#fbfbfb,#e6e6e6);border-right:1px solid #c5c5c5;border-bottom:1px solid #c5c5c5"><svg class="a" style="left:5px;top:6px" width="5" height="9" viewBox="0 0 5 9"><path d="M0.500 0.500h4M0.500 8.500h4M2.500 0.500v8" stroke="#8a8a8a" stroke-width="1" fill="none"/></svg></div>
 <div class="a" style="left:16px;top:0;width:20px;height:20px;background:#fff;border:1px dotted #222"></div>
 <div class="ck" style="left:20.500px;top:4.500px;border-color:#5d9ad8"><svg class="a" style="left:0.500px;top:0.500px" width="8" height="8" viewBox="0 0 8 8"><path d="M1 3.500l2.200 2.500 3.800-5" fill="none" stroke="#1a5fc8" stroke-width="2"/></svg></div>
 <div class="gc" style="left:36px;width:56px;padding-left:3px;letter-spacing:0.05px">PNT0126</div><div class="gc" style="left:92px;width:73px">Test T</div><div class="gc" style="left:165px;width:62px">4684</div><div class="gc" style="left:227px;width:70px">10-01-20...</div><div class="gc" style="left:297px;width:57px">Albert...</div><div class="gc r" style="left:354px;width:65px">$1,664.00</div><div class="gc r" style="left:419px;width:71px">$1,664.00</div><div class="gc r" style="left:490px;width:60px">$0.00</div><div class="gc r" style="left:550px;width:64px">$0.00</div><div class="gc r" style="left:614px;width:98px">$0.00</div><div class="gc r" style="left:712px;width:65px">$0.00</div><div class="gc" style="left:777px;width:74px"></div>
</div>
<!-- navigator -->
<div class="a" style="left:182px;top:458px;width:852px;height:20px;background:#fff">
<div class="nb" style="left:1px"><svg viewBox="0 0 11 9"><path d="M1 0.500v8" stroke="#9a9a9a" stroke-width="1.500"/><path d="M6 0.500l-4 4 4 4zM10.500 0.500l-4 4 4 4z" fill="#9a9a9a"/></svg></div><div class="nb" style="left:21px"><svg viewBox="0 0 11 9"><path d="M5.500 0.500l-4 4 4 4zM10 0.500l-4 4 4 4z" fill="#9a9a9a"/></svg></div><div class="nb" style="left:41px"><svg viewBox="0 0 11 9"><path d="M7.500 0.500l-4 4 4 4z" fill="#9a9a9a"/></svg></div>
<div class="t" style="left:63px;top:2px;font-family:'Liberation Sans',sans-serif;font-size:11px;letter-spacing:0">Record 1 of 1</div>
<div class="nb" style="left:135px"><svg viewBox="0 0 11 9"><path d="M4 0.500l4 4-4 4z" fill="#9a9a9a"/></svg></div><div class="nb" style="left:154px"><svg viewBox="0 0 11 9"><path d="M1.500 0.500l4 4-4 4zM6 0.500l4 4-4 4z" fill="#9a9a9a"/></svg></div><div class="nb" style="left:173px"><svg viewBox="0 0 11 9"><path d="M10 0.500v8" stroke="#9a9a9a" stroke-width="1.500"/><path d="M0.500 0.500l4 4-4 4zM5 0.500l4 4-4 4z" fill="#9a9a9a"/></svg></div>
<div class="a" style="left:192px;top:1px;width:660px;height:17px;background:linear-gradient(#fafafa,#ececec);border:1px solid #d6d6d6"></div>
<div class="a" style="left:192px;top:1px;width:15px;height:17px;background:linear-gradient(#f2f2f2,#dcdcdc);border:1px solid #cfcfcf"><svg class="a" style="left:3px;top:3px" width="7" height="9" viewBox="0 0 7 9"><path d="M5.500 1l-4 3.500 4 3.500" fill="none" stroke="#aaa" stroke-width="1.500"/></svg></div>
<div class="a" style="left:837px;top:1px;width:15px;height:17px;background:linear-gradient(#f2f2f2,#dcdcdc);border:1px solid #cfcfcf"><svg class="a" style="left:4px;top:3px" width="7" height="9" viewBox="0 0 7 9"><path d="M1.500 1l4 3.500-4 3.500" fill="none" stroke="#aaa" stroke-width="1.500"/></svg></div>
</div>
<!-- payment header -->
<div class="hdr" style="left:178px;top:487px;width:860px;height:19px;background:linear-gradient(#dff1ff,#c4e4fd 50%,#a6d6fb)"></div>
<div class="t b" style="left:182px;top:490px;letter-spacing:0.4px">Payment</div>
<div class="a" style="left:179px;top:506px;width:859px;height:194px;border:1px solid #cfcfcf;border-top:0;background:#fafafa"></div>
<div class="lbl" style="left:185px;width:102px;top:518px">Payment Date</div>
<div class="inp" style="left:294px;top:516px;width:113px;background:#ffbcbc">10-01-2013<i class="cb"></i></div>
<div class="lbl" style="left:185px;width:102px;top:540px">Insurance</div>
<div class="inp" style="left:294px;top:538px;width:113px">Alberta Blue ...<i class="cb"></i></div>
<div class="lbl" style="left:185px;width:102px;top:562px">Payment Method</div>
<div class="inp" style="left:294px;top:560px;width:113px">Cheque<i class="cb"></i></div>
<div class="lbl" style="left:185px;width:102px;top:584px">Bank Name</div>
<div class="inp" style="left:294px;top:582px;width:113px">Global Bank</div>
<div class="lbl" style="left:185px;width:102px;top:606px">Cheque No.</div>
<div class="inp" style="left:294px;top:604px;width:113px">2554689</div>
<div class="lbl" style="left:185px;width:102px;top:627px;font-family:'Liberation Sans',sans-serif;font-size:11px;letter-spacing:0">Issued On</div>
<div class="inp" style="left:294px;top:626px;width:113px;line-height:18px;font-family:'Liberation Sans',sans-serif;font-size:11px;letter-spacing:0">10-01-2013<i class="cb"></i></div>
<div class="t" style="left:394px;width:200px;text-align:center;letter-spacing:0.32px;top:519px">Insurance Claimed</div>
<div class="t b" style="left:394px;width:200px;text-align:center;top:539px">$1,664.00</div>
<div class="t" style="left:394px;width:200px;text-align:center;letter-spacing:0.32px;top:562px">Insurance Received</div>
<div class="t b" style="left:394px;width:200px;text-align:center;top:583px">$1,664.00</div>
<div class="t" style="left:394px;width:200px;text-align:center;letter-spacing:0.32px;top:606px">Total Adjustment Amount</div>
<div class="t b" style="left:394px;width:200px;text-align:center;top:627px">$0.00</div>
<div class="btn" style="left:458px;top:659px;width:77px;font-family:'Liberation Sans',sans-serif;font-size:11px;letter-spacing:0">Pay</div>
<!-- right grid -->
<div class="a" style="left:583px;top:510px;width:451px;height:185px;border:1px solid #d4d4d4;background:#fbfbfb"></div>
<div class="a" style="left:584px;top:512px;width:448px;height:181px;border:1px solid #bcbcbc;background:#fff"></div>
<div class="a" style="left:585px;top:513px;width:446px;height:22px"><div class="gh" style="left:0px;width:17px;height:22px;padding-left:0px;line-height:23px"></div><div class="gh" style="left:17px;width:65px;height:22px;padding-left:5px;line-height:23px">Invo...</div><div class="gh" style="left:82px;width:122px;height:22px;padding-left:8px;line-height:23px">Payment Met...</div><div class="gh" style="left:204px;width:83px;height:22px;padding-left:6px;line-height:23px">Amount...</div><div class="gh" style="left:287px;width:51px;height:22px;padding-left:6px;line-height:23px">Ad...</div><div class="gh" style="left:338px;width:84px;height:22px;padding-left:6px;line-height:23px">Paymen...</div><div class="gh" style="left:422px;width:24px;height:22px;padding-left:0px;line-height:23px"></div></div>
<div class="a" style="left:585px;top:669px;width:446px;height:24px;border:1px solid #b2b2b2;background:linear-gradient(#f6f6f6,#e2e2e2)"></div>
<div class="a r" style="left:790px;top:672px;width:81px;height:17px;background:linear-gradient(#fff,#f4f4f4);border:1px solid #dcdcdc;font-family:'Liberation Sans',sans-serif;font-size:11px;letter-spacing:0;line-height:16px;padding-right:3px">0</div>
<div class="a r" style="left:873px;top:672px;width:49px;height:17px;background:linear-gradient(#fff,#f4f4f4);border:1px solid #dcdcdc;font-family:'Liberation Sans',sans-serif;font-size:11px;letter-spacing:0;line-height:16px;padding-right:3px">0</div>


<div class="a" id="status" style="left:0;top:713px;width:1051px;height:30px;background:linear-gradient(#f6f6f6,#f1f1f1 30%,#ebebeb);border-top:1px solid #dadada">
<svg class="a" style="left:5px;top:6px" width="18" height="18" viewBox="0 0 18 18"><rect width="18" height="18" rx="3" fill="#c8141c"/><rect x="1" y="1" width="16" height="16" rx="2.500" fill="none" stroke="#e86a6a" stroke-width="1"/><path d="M14 9h-8M9 4.500l-4.500 4.500 4.500 4.500" fill="none" stroke="#fff" stroke-width="2.200"/></svg>
<div class="st" style="left:27px">Log Out</div>
<div class="ss" style="left:91px"></div>
<svg class="a" style="left:98px;top:6px" width="18" height="18" viewBox="0 0 18 18"><rect width="18" height="18" rx="3" fill="#3f94e0"/><path d="M3 15c0-3 1.500-4 3.500-4.500-1.500-1.500-1.500-6 1.500-6s3 4.500 1.500 6c2 .5 3.500 1.500 3.500 4.500z" fill="#fff"/><circle cx="13" cy="12.500" r="3.500" fill="#e8f2fc" stroke="#2a6ab8" stroke-width="0.800"/><path d="M11.500 12.500a1.500 1.500 0 1 1 1.500 1.500" fill="none" stroke="#2a6ab8" stroke-width="0.900"/></svg>
<div class="st" style="left:121px">Change User</div>
<div class="ss" style="left:221px"></div>
<svg class="a" style="left:229px;top:6px" width="18" height="18" viewBox="0 0 18 18"><rect width="18" height="18" rx="3" fill="#f0a81c"/><rect x="1" y="1" width="16" height="16" rx="2.500" fill="none" stroke="#f8d27a" stroke-width="1"/><path d="M6 9v-2.500a3 3 0 0 1 6 0v2.500" fill="none" stroke="#3a2a10" stroke-width="1.600"/><rect x="4.500" y="8.500" width="9" height="6" rx="1" fill="#3a2a10"/></svg>
<div class="st" style="left:251px">Lock Screen</div>
<div class="st" style="left:802px;white-space:pre;font-size:11px;letter-spacing:0.33px">User :  Harry Premi</div>
<div class="ss" style="left:934px"></div>
<div class="st" style="left:942px;font-size:11px;letter-spacing:0.23px">Demo Location</div>
</div>


</body></html>
